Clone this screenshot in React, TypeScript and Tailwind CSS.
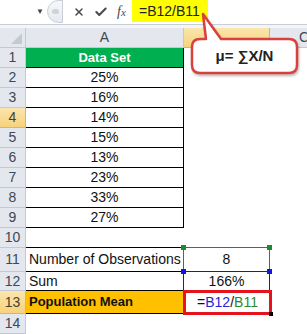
import { X, Check } from 'lucide-react';

const hdr = 'w-[26px] shrink-0 border-r border-b border-[#c3c9d2] bg-[#e4e8ee] text-[14px] text-[#3e4754] flex items-center justify-center';
const hdrHi = 'w-[26px] shrink-0 border-r border-b border-[#d9b664] bg-gradient-to-b from-[#fbe6ae] to-[#f6d27c] text-[14px] text-[#4a4030] flex items-center justify-center';

const values = ['25%', '16%', '14%', '15%', '13%', '23%', '33%', '27%'];

function Corner({ className }: { className: string }) {
  return <span className={`absolute w-[5px] h-[5px] ${className}`} />;
}

export default function App() {
  return (
    <div className="relative w-[307px] h-[334px] overflow-hidden bg-white font-['Liberation_Sans',Arial,sans-serif] text-[#111]">
      {/* formula bar */}
      <div className="flex h-[25px] border-b border-[#c9ced6]">
        <div className="w-[47px] flex items-center justify-end pr-[3px]">
          <span className="text-[8px] text-[#444]">▼</span>
        </div>
        <div className="w-[16px] h-[23px] rounded-l-full border border-[#c9ced6] bg-gradient-to-b from-[#f7f8fa] to-[#e6e9ee] flex items-center justify-center">
          <span className="w-[7px] h-[5px] rounded-full bg-[#cfd3d9]" />
        </div>
        <div className="w-[69px] flex items-center pl-[10px] gap-[9px] text-[#4a4a4a]">
          <X size={12} strokeWidth={3} />
          <Check size={14} strokeWidth={3.5} />
          <span className="font-['Liberation_Serif',serif] italic text-[14px] leading-none">
            f<span className="text-[11px]">x</span>
          </span>
        </div>
        <div className="w-[76px] h-[22px] bg-[#ffff00] flex items-center pl-[7px] text-[14px] text-[#222]">
          =B12/B11
        </div>
        <div className="flex-1" />
      </div>
      <div className="h-[3px] bg-[#f4f5f7]" />

      {/* column headers */}
      <div className="flex h-[20px]">
        <div className="w-[26px] shrink-0 border-r border-b border-[#c3c9d2] bg-[#e4e8ee] relative">
          <span className="absolute right-[3px] bottom-[3px] w-0 h-0 border-l-[11px] border-l-transparent border-b-[11px] border-b-[#c5cad1]" />
        </div>
        <div className="w-[158px] shrink-0 border-r border-b border-[#c3c9d2] bg-[#e4e8ee] text-[14px] text-[#3e4754] flex items-center justify-center">A</div>
        <div className="w-[86px] shrink-0 border-r border-b border-[#d9b664] bg-gradient-to-b from-[#fbe6ae] to-[#f6d27c]" />
        <div className="flex-1 border-b border-[#c3c9d2] bg-[#e4e8ee] text-[14px] text-[#3e4754] flex items-center pl-[29px]">C</div>
      </div>

      {/* row 1 */}
      <div className="flex h-[20px]">
        <div className={hdr}>1</div>
        <div className="w-[158px] shrink-0 border-r border-b border-black bg-[#00b050] text-white font-bold text-[13px] flex items-center justify-center">Data Set</div>
      </div>

      {/* rows 2-9 */}
      {values.map((v, i) => (
        <div key={v + i} className="flex h-[20px]">
          <div className={i === 2 ? hdrHi : hdr}>{i + 2}</div>
          <div className="w-[158px] shrink-0 border-r border-b border-black text-[14px] flex items-center justify-center">{v}</div>
        </div>
      ))}

      {/* row 10 */}
      <div className="flex h-[20px]">
        <div className={hdr}>10</div>
        <div className="w-[158px] shrink-0 border-b border-black" />
      </div>

      {/* row 11 */}
      <div className="flex h-[24px]">
        <div className={hdr}>11</div>
        <div className="w-[158px] shrink-0 border-r border-b border-black text-[14px] flex items-center pl-[3px] whitespace-nowrap">Number of Observations</div>
        <div className="relative w-[87px] -ml-px -mt-px h-[25px] border border-[#1e8a2e] text-[14px] flex items-center justify-center">
          8
          <Corner className="-left-[3px] -top-[3px] bg-[#1e8a2e]" />
          <Corner className="-right-[3px] -top-[3px] bg-[#1e8a2e]" />
        </div>
      </div>

      {/* row 12 */}
      <div className="flex h-[19px]">
        <div className={hdr}>12</div>
        <div className="w-[158px] shrink-0 border-r border-b border-black text-[14px] flex items-center pl-[3px]">Sum</div>
        <div className="relative w-[87px] -ml-px -mt-px h-[20px] border border-[#1414e0] text-[14px] flex items-center justify-center">
          166%
          <Corner className="-left-[3px] -top-[3px] bg-[#1414e0]" />
          <Corner className="-right-[3px] -top-[3px] bg-[#1414e0]" />
        </div>
      </div>

      {/* row 13 */}
      <div className="flex h-[23px]">
        <div className={hdrHi}>13</div>
        <div className="w-[158px] shrink-0 border-b border-black bg-[#ffc000] font-bold text-[13px] flex items-center pl-[3px]">Population Mean</div>
        <div className="relative w-[89px] -ml-px -mt-px h-[25px] border-[3px] border-[#e5141c] bg-white text-[14px] flex items-center justify-center">
          =<span className="text-[#2525d8]">B12</span>/<span className="text-[#2a8a2a]">B11</span>
          <span className="absolute -right-[4px] -bottom-[4px] w-[4px] h-[4px] bg-black" />
        </div>
      </div>

      {/* row 14 */}
      <div className="flex h-[20px]">
        <div className={hdr}>14</div>
      </div>

      {/* callout */}
      <div className="absolute left-[186px] top-[8px] w-[116px] h-[72px]">
        <svg width="116" height="72" viewBox="186 8 116 72" className="absolute inset-0 drop-shadow-[1px_2px_1px_rgba(0,0,0,0.25)]">
          <path
            d="M200 39 L206 39 L203 14 L221 39 L289 39 Q297 39 297 47 L297 65 Q297 73 289 73 L200 73 Q192 73 192 65 L192 47 Q192 39 200 39 Z"
            fill="white"
            stroke="#d9413f"
            strokeWidth="2.5"
            strokeLinejoin="round"
          />
        </svg>
        <div className="absolute left-[6px] top-[31px] w-[105px] h-[34px] flex items-center justify-center font-bold text-[15px] text-[#222]">
          μ= ∑X/N
        </div>
      </div>
    </div>
  );
}
